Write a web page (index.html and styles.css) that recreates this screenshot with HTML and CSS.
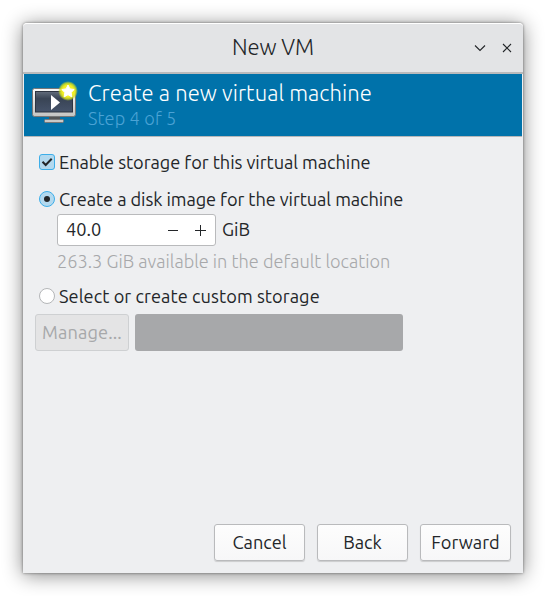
FILE: index.html
```html
<!DOCTYPE html>
<html lang="en">
<head>
<meta charset="utf-8">
<title>New VM</title>
<link rel="stylesheet" href="styles.css">
</head>
<body>
<main class="window">
  <header class="titlebar">
    <h1 class="title">New VM</h1>
    <div class="controls">
      <svg width="12" height="12" viewBox="0 0 12 12"><path d="M1 3.500 6 8.500 11 3.500"/></svg>
      <svg width="12" height="12" viewBox="0 0 12 12"><path d="M2 2 10 10M10 2 2 10"/></svg>
    </div>
  </header>
  <section class="banner">
    <svg class="vm-icon" width="50" height="46" viewBox="0 0 50 46">
      <defs>
        <linearGradient id="screen" x2="0" y2="1"><stop offset="0" stop-color="#626c7c"/><stop offset=".35" stop-color="#394455"/><stop offset="1" stop-color="#46536a"/></linearGradient>
        <linearGradient id="frame" x2="0" y2="1"><stop offset="0" stop-color="#fafafa"/><stop offset="1" stop-color="#c4c4c2"/></linearGradient>
        <radialGradient id="glow"><stop offset="0" stop-color="#fffb50"/><stop offset=".6" stop-color="#f0ee22"/><stop offset=".8" stop-color="#d5e01c" stop-opacity=".8"/><stop offset="1" stop-color="#b5d030" stop-opacity="0"/></radialGradient>
      </defs>
      <path d="M17 35h11v4H17z" fill="#555"/>
      <rect x="12.500" y="38.500" width="19" height="3" rx="1" fill="#c9c9c7" stroke="#777"/>
      <rect x=".5" y="7.500" width="43" height="28" rx="2" fill="url(#frame)" stroke="#777"/>
      <rect x="3.500" y="10.500" width="37" height="20.500" fill="url(#screen)" stroke="#2d3441"/>
      <path d="M19 14v15l9-7.500z" fill="#fff"/>
      <circle cx="36" cy="10" r="10" fill="url(#glow)"/>
      <path d="m36 4 1.900 3.900 4.300.6-3.100 3 .8 4.400-3.900-2.200-3.900 2.200.8-4.400-3.100-3 4.300-.6z" fill="#fff" stroke="#fff" stroke-linejoin="round"/>
    </svg>
    <div class="heading">
      <h2 class="heading-title">Create a new virtual machine</h2>
      <p class="step">Step 4 of 5</p>
    </div>
  </section>
  <section class="content">
    <label class="option enable">
      <svg width="16" height="16" viewBox="0 0 16 16"><rect x=".5" y=".5" width="15" height="15" rx="2.500" class="on"/><path d="m3.500 7.800 3.200 3.200 6-6.200" class="tick"/></svg>
      <span>Enable storage for this virtual machine</span>
    </label>
    <label class="option create">
      <svg width="16" height="16" viewBox="0 0 16 16"><circle cx="8" cy="8" r="7.500" class="on"/><circle cx="8" cy="8" r="3" fill="#232629"/></svg>
      <span>Create a disk image for the virtual machine</span>
    </label>
    <div class="size">
      <div class="spin">
        <span class="value">40.0</span>
        <svg width="40" height="12" viewBox="0 0 40 12"><path d="M1 6.500h10M28 6.500h11M33.500 1v11"/></svg>
      </div>
      <span class="value">GiB</span>
    </div>
    <p class="hint">263.3 GiB available in the default location</p>
    <label class="option custom">
      <svg width="16" height="16" viewBox="0 0 16 16"><circle cx="8" cy="8" r="7.500" class="off"/></svg>
      <span>Select or create custom storage</span>
    </label>
    <div class="storage">
      <button class="manage" disabled>Manage...</button>
      <div class="path"></div>
    </div>
  </section>
  <footer class="actions">
    <button class="btn">Cancel</button>
    <button class="btn">Back</button>
    <button class="btn">Forward</button>
  </footer>
</main>
</body>
</html>
```
FILE: styles.css
```css
* { box-sizing: border-box; }
body {
  margin: 0;
  padding: 23px;
  background: #fff;
  color: #232629;
  font: 370 18.2px/24px Ubuntu, "Noto Sans", sans-serif;
  white-space: nowrap;
}
h1, h2, p { margin: 0; font-weight: 360; }
button { font: inherit; color: inherit; padding: 0 0 2px; }
svg { display: block; flex: none; fill: none; }
.window {
  display: flex;
  flex-direction: column;
  width: 500px;
  height: 550px;
  background: #eeeff1;
  border-radius: 4px 4px 0 0;
  box-shadow: 0 0 3px rgba(0,0,0,.5), 0 2px 20px rgba(0,0,0,.48);
}
.titlebar {
  display: grid;
  grid-template-columns: 1fr auto 1fr;
  align-items: center;
  height: 51px;
  background: #e3e4e6;
  border-top: 1px solid #fff;
  border-bottom: 2px solid #b9babc;
  border-radius: 4px 4px 0 0;
}
.title { grid-column: 2; padding-bottom: 2px; font-size: 22px; letter-spacing: -.1px; }
.controls { display: flex; justify-content: flex-end; gap: 15px; padding-right: 10px; }
.controls svg { stroke: #232629; stroke-width: 1.1; }
.banner {
  display: flex;
  height: 63px;
  margin: 0 1px;
  padding-left: 8px;
  background: #0072aa;
  border-bottom: 1px solid #b5b7b9;
}
.vm-icon { margin-top: 7px; }
.heading { padding: 5px 0 0 6px; }
.heading-title { font-size: 22px; line-height: 27px; color: #fff; letter-spacing: .08px; }
.step { color: #4ba3d5; line-height: 24px; letter-spacing: .12px; }
.content { flex: 1; padding: 13px 12px 0; }
.option { display: flex; align-items: center; gap: 4px; height: 24px; padding-left: 4px; }
.enable { letter-spacing: -.05px; }
.create { margin-top: 13px; letter-spacing: -.08px; }
.on { fill: #b3d9ef; stroke: #3daee9; }
.off { fill: #fff; stroke: #b4b6b8; }
.tick { stroke: #232629; stroke-width: 2; }
.size { display: flex; align-items: center; gap: 6px; margin: 3px 0 0 22px; }
.spin {
  display: flex;
  align-items: center;
  justify-content: space-between;
  width: 159px;
  height: 32px;
  padding: 0 8px;
  background: #fff;
  border: 1px solid #b9babc;
  border-radius: 3px;
}
.spin svg { stroke: #232629; }
.value { padding-bottom: 2px; }
.hint { margin: 3px 0 0 22px; color: #a7a8aa; }
.custom { margin-top: 11px; letter-spacing: .07px; }
.storage { display: flex; gap: 6px; margin-top: 6px; }
.manage {
  width: 94px;
  height: 37px;
  background: #e4e4e5;
  border: 1px solid #ced0d2;
  border-radius: 3px;
  color: #a7a8aa;
  letter-spacing: .12px;
}
.path { width: 268px; height: 37px; background: #a7a8aa; border-radius: 3px; }
.actions { display: flex; justify-content: flex-end; gap: 12px; padding: 0 12px 12px; }
.btn {
  width: 91px;
  height: 37px;
  background: linear-gradient(#fdfdfd, #f7f7f8);
  border: 1px solid #b9babc;
  border-radius: 3px;
  box-shadow: 0 1px 1px rgba(0,0,0,.15);
}
```
